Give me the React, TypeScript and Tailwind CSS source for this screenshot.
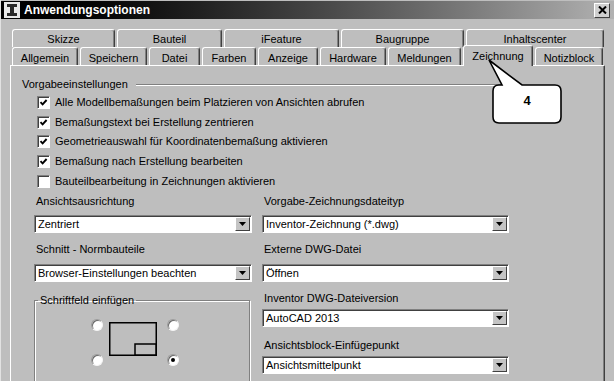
import React from 'react';

const backTabs = [
  { label: 'Skizze', w: 'w-[103px]' },
  { label: 'Bauteil', w: 'w-[105px]' },
  { label: 'iFeature', w: 'w-[115px]' },
  { label: 'Baugruppe', w: 'w-[123px]' },
  { label: 'Inhaltscenter', w: 'w-[138px]' },
];

const frontTabs = [
  { label: 'Allgemein', w: 'w-[66px]' },
  { label: 'Speichern', w: 'w-[67px]' },
  { label: 'Datei', w: 'w-[51px]' },
  { label: 'Farben', w: 'w-[54px]' },
  { label: 'Anzeige', w: 'w-[60px]' },
  { label: 'Hardware', w: 'w-[66px]' },
  { label: 'Meldungen', w: 'w-[73px]' },
  { label: 'Zeichnung', w: 'w-[70px]', active: true },
  { label: 'Notizblock', w: 'w-[68px]' },
];

const options = [
  { label: 'Alle Modellbemaßungen beim Platzieren von Ansichten abrufen', checked: true },
  { label: 'Bemaßungstext bei Erstellung zentrieren', checked: true },
  { label: 'Geometrieauswahl für Koordinatenbemaßung aktivieren', checked: true },
  { label: 'Bemaßung nach Erstellung bearbeiten', checked: true },
  { label: 'Bauteilbearbeitung in Zeichnungen aktivieren', checked: false },
];

const Checkbox = ({ checked, label }: { checked: boolean; label: string }) => (
  <div className="flex items-center h-[19.6px]">
    <div className="w-[13px] h-[13px] bg-white border border-[#808080] border-b-white border-r-white shadow-[inset_1px_1px_0_#404040] flex items-center justify-center">
      {checked && (
        <svg width="9" height="9" viewBox="0 0 9 9">
          <path d="M1.5 4.2 L3.6 6.4 L7.6 2" stroke="#000" strokeWidth="1.9" fill="none" />
        </svg>
      )}
    </div>
    <span className="ml-[5px] leading-[13px]">{label}</span>
  </div>
);

const Select = ({ value }: { value: string }) => (
  <div className="h-[18px] w-full flex items-center bg-white border border-[#808080] border-b-white border-r-white shadow-[inset_1px_1px_0_#404040]">
    <span className="flex-1 pl-[3px] leading-[14px]">{value}</span>
    <div className="w-[15px] h-[14px] mr-px bg-[#c4c4c4] border border-white border-b-[#404040] border-r-[#404040] flex items-center justify-center">
      <svg width="7" height="4" viewBox="0 0 7 4">
        <path d="M0 0 H7 L3.5 4 Z" fill="#000" />
      </svg>
    </div>
  </div>
);

const Radio = ({ on }: { on?: boolean }) => (
  <div className="w-[12px] h-[12px] rounded-full bg-white border border-[#9a9a9a] border-b-[#f4f4f4] border-r-[#f4f4f4] shadow-[inset_1px_1px_0_#6a6a6a] flex items-center justify-center">
    {on && <div className="w-[4px] h-[4px] rounded-full bg-black" />}
  </div>
);

export default function App() {
  return (
    <div className="relative w-[614px] h-[381px] overflow-hidden flex flex-col bg-[#bebebe] border-l border-l-[#e2e2e2] text-[11px] text-black font-['Liberation_Sans',Arial,sans-serif]">
      {/* Title bar */}
      <div className="mt-px h-[21px] flex items-center bg-linear-to-r from-black to-[#b2b2b2]">
        <svg width="16" height="16" viewBox="0 0 16 16" className="ml-[3px]">
          <rect x="0" y="0" width="16" height="16" fill="#e8e8e8" />
          <rect x="3" y="2" width="10" height="3" fill="#2a2a2a" />
          <rect x="6" y="4" width="4" height="8" fill="#2a2a2a" />
          <rect x="3" y="11" width="10" height="3" fill="#2a2a2a" />
        </svg>
        <span className="ml-[4px] text-white font-bold text-[12px]">Anwendungsoptionen</span>
        <div className="ml-auto mr-[4px] w-[16px] h-[15px] bg-[#d0d0d0] border border-white border-b-[#404040] border-r-[#404040] flex items-center justify-center">
          <svg width="9" height="8" viewBox="0 0 9 8">
            <path d="M1 0.5 L8 7.5 M8 0.5 L1 7.5" stroke="#000" strokeWidth="2" />
          </svg>
        </div>
      </div>

      {/* Back tab row */}
      <div className="mt-[10px] ml-[11px] h-[18px] flex gap-[2px]">
        {backTabs.map((t) => (
          <div
            key={t.label}
            className={`${t.w} h-full pt-[2px] flex items-center justify-center bg-[#bebebe] border-t border-l border-white border-r border-r-[#404040] rounded-t-[3px] shadow-[inset_-1px_0_0_#808080]`}
          >
            {t.label}
          </div>
        ))}
      </div>

      {/* Front tab row */}
      <div className="ml-[11px] h-[18px] flex items-end gap-[2px]">
        {frontTabs.map((t) =>
          t.active ? (
            <div
              key={t.label}
              className={`${t.w} relative z-10 h-[21px] -mb-px flex justify-center pt-[2px] bg-[#bebebe] border-t border-l border-white border-r border-r-[#404040] rounded-t-[3px] shadow-[inset_-1px_0_0_#808080]`}
            >
              {t.label}
            </div>
          ) : (
            <div
              key={t.label}
              className={`${t.w} h-full pt-[3px] flex items-center justify-center bg-[#bebebe] border-t border-l border-white border-r border-r-[#404040] rounded-t-[3px] shadow-[inset_-1px_0_0_#808080]`}
            >
              {t.label}
            </div>
          )
        )}
      </div>

      {/* Tab panel */}
      <div className="ml-[9px] w-[595px] flex-1 flex flex-col border-t border-l border-white border-r border-r-[#404040] shadow-[inset_-1px_0_0_#808080]">
        <div className="mt-[12px] ml-[11px] w-[482px] h-[13px] flex items-center">
          <span className="leading-[13px]">Vorgabeeinstellungen</span>
          <div className="ml-[8px] flex-1 h-[2px] border-t border-[#808080] border-b border-b-white" />
        </div>

        <div className="mt-[2px] ml-[26px] flex flex-col">
          {options.map((o) => (
            <Checkbox key={o.label} checked={o.checked} label={o.label} />
          ))}
        </div>

        <div className="mt-[3px] ml-[23px] flex">
          {/* Left column */}
          <div className="w-[218px] flex flex-col">
            <div className="ml-[2px] h-[14px] leading-[14px]">Ansichtsausrichtung</div>
            <div className="mt-[7px]"><Select value="Zentriert" /></div>
            <div className="mt-[9px] ml-[2px] h-[14px] leading-[14px]">Schnitt - Normbauteile</div>
            <div className="mt-[8px]"><Select value="Browser-Einstellungen beachten" /></div>

            <fieldset className="mt-[12px] w-[216px] h-[100px] border border-[#808080] shadow-[inset_1px_1px_0_#fff,1px_1px_0_#fff]">
              <legend className="ml-[3px] px-[2px] leading-[13px]">Schriftfeld einfügen</legend>
              <div className="pt-[12px] pl-[56px] flex">
                <div className="h-[47px] flex flex-col justify-between">
                  <Radio />
                  <Radio />
                </div>
                <svg width="48" height="34" viewBox="0 0 48 34" className="ml-[6px] mt-[3px]">
                  <rect x="0.75" y="0.75" width="46.5" height="32.5" fill="none" stroke="#000" strokeWidth="1.5" />
                  <rect x="26" y="22" width="21.25" height="11.25" fill="none" stroke="#000" strokeWidth="1.5" />
                </svg>
                <div className="ml-[10px] h-[47px] flex flex-col justify-between">
                  <Radio />
                  <Radio on />
                </div>
              </div>
            </fieldset>
          </div>

          {/* Right column */}
          <div className="ml-[10px] w-[247px] flex flex-col">
            <div className="ml-[2px] h-[14px] leading-[14px]">Vorgabe-Zeichnungsdateityp</div>
            <div className="mt-[7px]"><Select value="Inventor-Zeichnung (*.dwg)" /></div>
            <div className="mt-[9px] ml-[2px] h-[14px] leading-[14px]">Externe DWG-Datei</div>
            <div className="mt-[8px]"><Select value="Öffnen" /></div>
            <div className="mt-[9px] ml-[2px] h-[14px] leading-[14px]">Inventor DWG-Dateiversion</div>
            <div className="mt-[4px]"><Select value="AutoCAD 2013" /></div>
            <div className="mt-[11px] ml-[2px] h-[14px] leading-[14px]">Ansichtsblock-Einfügepunkt</div>
            <div className="mt-[4px]"><Select value="Ansichtsmittelpunkt" /></div>
          </div>
        </div>
      </div>

      {/* Callout pointing at the Zeichnung tab */}
      <svg width="90" height="75" viewBox="0 0 90 75" className="absolute left-[479px] top-[55px] z-20">
        <path
          d="M19 30 L22 30 L9 5 L42 30 L75 30 Q81 30 81 36 L81 62 Q81 68 75 68 L19 68 Q13 68 13 62 L13 36 Q13 30 19 30 Z"
          fill="#fff"
          stroke="#000"
          strokeWidth="1.6"
        />
      </svg>
      <div className="absolute left-[492px] top-[85px] z-30 w-[68px] h-[38px] pb-[7px] flex items-center justify-center font-bold text-[13px]">
        4
      </div>
    </div>
  );
}
